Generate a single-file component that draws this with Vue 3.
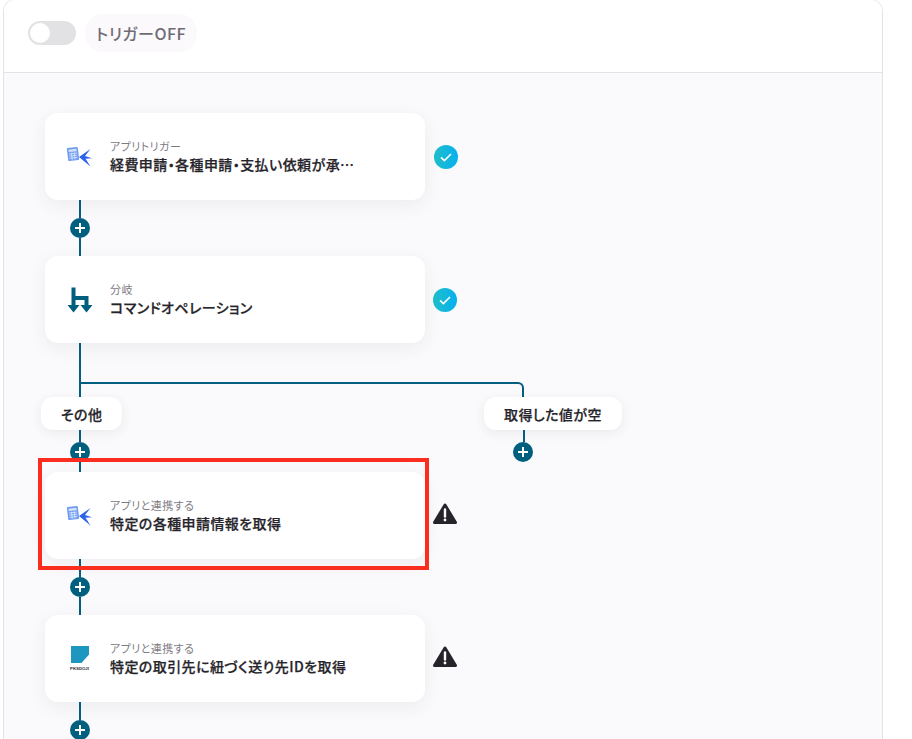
<script setup>
const cards = [
  { id: 1, icon: 'calc', label: 'アプリトリガー', title: '経費申請・各種申請・支払い依頼が承…', status: 'ok', nudge: true },
  { id: 2, icon: 'branch', label: '分岐', title: 'コマンドオペレーション', status: 'ok' }
]
const lower = [
  { id: 3, icon: 'calc', label: 'アプリと連携する', title: '特定の各種申請情報を取得', status: 'warn', marked: true },
  { id: 4, icon: 'pca', label: 'アプリと連携する', title: '特定の取引先に紐づく送り先IDを取得', status: 'warn' }
]
const groups = [
  { key: 'top', items: cards },
  { key: 'bottom', items: lower }
]
</script>

<template>
  <div class="page">
    <section class="panel">
      <header class="head">
        <span class="toggle"><span class="knob"></span></span>
        <span class="state">トリガーOFF</span>
      </header>
      <div class="canvas">
        <template v-for="group in groups" :key="group.key">
          <template v-for="(c, i) in group.items" :key="c.id">
            <div class="row">
              <div class="card" :class="{ marked: c.marked }">
                <span class="logo">
                  <svg v-if="c.icon === 'calc'" width="27" height="24" viewBox="0 0 27 24">
                    <g transform="rotate(-7 7 9)">
                      <rect x="1.500" y="2.500" width="11" height="13" rx="1" fill="#6f9cf2" />
                      <path d="M3 4.200h8v2.400H3z" fill="#d5e2fb" />
                      <path d="M3 8.500h8M3 10.700h8M3 12.900h8M5.600 7.600v7M8.400 7.600v7" stroke="#d5e2fb" stroke-width=".9" fill="none" />
                    </g>
                    <path d="M24.500 4 13 12 24.500 21.500 19.500 13.800 26 13.200 19 11z" fill="#2f62ea" />
                  </svg>
                  <svg v-else-if="c.icon === 'branch'" width="27" height="26" viewBox="0 0 27 26">
                    <path d="M7.500 .5V19M7.500 11H20.500V19" fill="none" stroke="#005f7f" stroke-width="4" />
                    <path d="M1.500 18h12l-6 7.500zM14.500 18h12l-6 7.500z" fill="#005f7f" />
                  </svg>
                  <span v-else class="pca">
                    <svg width="18" height="17" viewBox="0 0 18 17">
                      <path d="M0 0h18v8.500L10.500 17H0z" fill="#1d97bf" />
                    </svg>
                    <span class="pca-text">PKSDOJI</span>
                  </span>
                </span>
                <span class="copy">
                  <span class="label">{{ c.label }}</span>
                  <span class="title">{{ c.title }}</span>
                </span>
              </div>
              <span class="status" :class="{ nudge: c.nudge, raised: c.status === 'warn' }">
                <svg v-if="c.status === 'ok'" width="24" height="24" viewBox="0 0 24 24">
                  <defs>
                    <linearGradient :id="'ok' + c.id" x1="0" x2="1" y1="0" y2="0">
                      <stop offset="0" stop-color="#20bfc9" />
                      <stop offset="1" stop-color="#05b0ef" />
                    </linearGradient>
                  </defs>
                  <circle cx="12" cy="12" r="12" :fill="'url(#ok' + c.id + ')'" />
                  <path d="M7 12.400l3.400 3.200L17 9" fill="none" stroke="#fff" stroke-width="1.600" />
                </svg>
                <svg v-else width="24" height="22" viewBox="0 0 24 22">
                  <path d="M12 2 22.500 19.500H1.500z" fill="#26242a" stroke="#26242a" stroke-width="3" stroke-linejoin="round" />
                  <path d="M12 6.500v7" stroke="#fff" stroke-width="2.400" stroke-linecap="round" />
                  <circle cx="12" cy="17" r="1.400" fill="#fff" />
                </svg>
              </span>
            </div>
            <div v-if="i < group.items.length - 1 && group.key === 'top'" class="link">
              <span class="stem"></span><span class="plus"></span><span class="stem"></span>
            </div>
            <div v-if="group.key === 'bottom'" class="link">
              <span class="stem"></span><span class="plus"></span><span class="stem"></span>
            </div>
          </template>
          <div v-if="group.key === 'top'" class="branch">
            <div class="arm">
              <span class="stem drop"></span>
              <span class="pill">その他</span>
              <span class="stem short"></span>
              <span class="plus"></span>
              <span class="stem tail"></span>
            </div>
            <div class="arm right">
              <span class="elbow"></span>
              <span class="pill">取得した値が空</span>
              <span class="stem short"></span>
              <span class="plus"></span>
            </div>
          </div>
        </template>
      </div>
    </section>
  </div>
</template>

<style scoped>
.page {
  height: 739px;
  overflow: hidden;
  background: #fff;
  font-family: "Noto Sans CJK JP", "Noto Sans", sans-serif;
  font-feature-settings: "palt";
}
.panel {
  width: 880px;
  margin: -1px 0 0 3px;
  box-sizing: border-box;
  border: 1px solid #e3e3e5;
  border-radius: 12px 12px 0 0;
  overflow: hidden;
}
.head {
  height: 73px;
  box-sizing: border-box;
  display: flex;
  align-items: center;
  gap: 9px;
  padding: 0 0 6px 24px;
  background: #fff;
  border-bottom: 1px solid #e3e3e5;
}
.toggle {
  width: 48px;
  height: 24px;
  box-sizing: border-box;
  padding: 2px;
  border-radius: 12px;
  background: #e2e1e4;
  display: flex;
}
.knob {
  width: 20px;
  height: 20px;
  border-radius: 50%;
  background: #fff;
}
.state {
  height: 38px;
  display: flex;
  align-items: center;
  padding: 0 11px;
  border-radius: 18px;
  background: #fbf9fc;
  color: #6f6c74;
  font-size: 16px;
  font-weight: 500;
  letter-spacing: .03em;
}
.canvas {
  height: 700px;
  padding: 40px 0 0 41px;
  background: #faf9fb;
}
.row {
  display: flex;
  align-items: center;
  gap: 8px;
}
.card {
  position: relative;
  width: 380px;
  height: 87px;
  box-sizing: border-box;
  display: flex;
  align-items: center;
  gap: 17px;
  padding: 0 0 0 21px;
  background: #fff;
  border-radius: 13px;
  box-shadow: 0 5px 18px rgba(60, 50, 80, .07);
}
.marked::after {
  content: "";
  position: absolute;
  inset: -14px -4px -11px -7px;
  border: 4px solid #fb2d1f;
  pointer-events: none;
}
.logo {
  width: 27px;
  display: flex;
  justify-content: center;
  align-items: center;
  flex: none;
}
.pca {
  display: flex;
  flex-direction: column;
  align-items: center;
  gap: 3px;
}
.pca-text {
  font-family: "Liberation Sans", sans-serif;
  font-size: 4.300px;
  font-weight: 700;
  line-height: 5px;
  color: #2a2a30;
}
.copy {
  display: flex;
  flex-direction: column;
  min-width: 0;
  padding-top: 1px;
}
.label {
  font-size: 11px;
  line-height: 14px;
  color: #7d7a82;
  letter-spacing: .04em;
}
.title {
  margin-top: 1px;
  font-size: 14px;
  line-height: 21px;
  font-weight: 500;
  color: #26242a;
  letter-spacing: .03em;
  -webkit-text-stroke: .25px #26242a;
}
.status {
  display: flex;
  width: 24px;
}
.nudge {
  margin-left: 1px;
}
.raised {
  padding-bottom: 4px;
}
.link {
  width: 20px;
  height: 56px;
  margin-left: 25px;
  display: flex;
  flex-direction: column;
  align-items: center;
}
.stem {
  width: 2px;
  flex: 1;
  background: #005f7f;
}
.plus {
  flex: none;
  width: 20px;
  height: 20px;
  border-radius: 50%;
  background:
    linear-gradient(#fff, #fff) center / 10px 2.400px no-repeat,
    linear-gradient(#fff, #fff) center / 2.400px 10px no-repeat,
    #005f7f;
}
.branch {
  display: grid;
  grid-template-columns: 443px auto;
  justify-content: start;
  height: 129px;
  margin-left: -4px;
}
.arm {
  display: flex;
  flex-direction: column;
  align-items: flex-start;
  height: 129px;
}
.arm .stem {
  margin-left: 38px;
  flex: none;
}
.arm .plus {
  margin-left: 29px;
}
.right .stem {
  margin-left: 38.500px;
}
.drop { height: 54px; }
.short { height: 12px; }
.tail { height: 10px; }
.elbow {
  flex: none;
  box-sizing: border-box;
  width: 443px;
  height: 15px;
  margin: 39px 0 0 -403.500px;
  border-top: 2px solid #005f7f;
  border-right: 2px solid #005f7f;
  border-top-right-radius: 6px;
}
.pill {
  height: 33px;
  display: flex;
  align-items: center;
  padding: 0 20px;
  box-sizing: border-box;
  background: #fff;
  border-radius: 12px;
  box-shadow: 0 3px 12px rgba(60, 50, 80, .08);
  font-size: 14px;
  font-weight: 500;
  color: #26242a;
  letter-spacing: .03em;
  -webkit-text-stroke: .25px #26242a;
  white-space: nowrap;
}
</style>
